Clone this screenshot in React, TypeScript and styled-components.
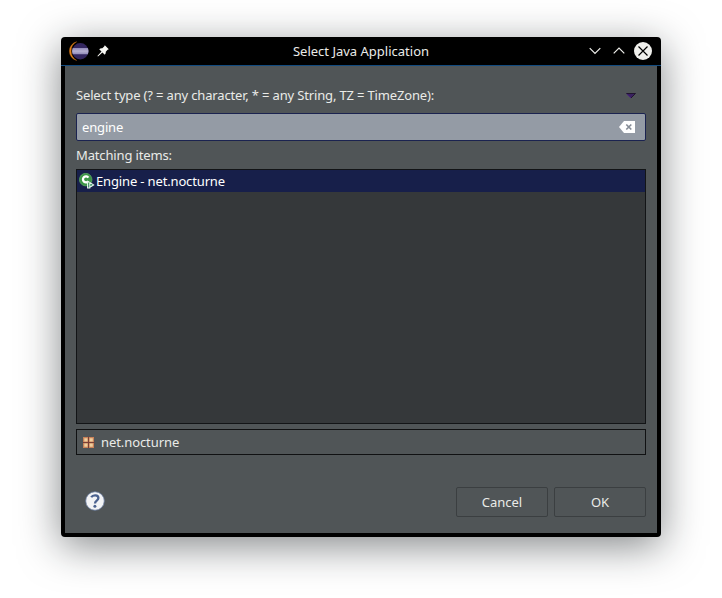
import React from 'react';
import styled, { createGlobalStyle } from 'styled-components';

const GlobalStyle = createGlobalStyle`
  * { box-sizing: border-box; }
  body {
    margin: 0;
    background: #fff;
    font-family: 'Noto Sans', sans-serif;
    font-size: 13px;
    line-height: 18px;
    color: #eaebe8;
    overflow: hidden;
  }
  svg { display: block; flex: none; }
`;

const Desktop = styled.main`
  height: 598px;
  padding: 37px 61px 61px;
`;

const Window = styled.section`
  width: 600px;
  height: 500px;
  display: flex;
  flex-direction: column;
  background: #000;
  border-radius: 4px;
  box-shadow: 0 9px 40px rgba(20, 24, 28, 0.52);
`;

const TitleBar = styled.header`
  height: 29px;
  flex: none;
  display: grid;
  grid-template-columns: 80px 1fr 80px;
  align-items: center;
  padding: 0 9px 0 7px;
  border-bottom: 1px solid #124b80;
`;

const TitleGroup = styled.div<{ $gap: number; $end?: boolean }>`
  display: flex;
  align-items: center;
  gap: ${(p) => p.$gap}px;
  justify-content: ${(p) => (p.$end ? 'flex-end' : 'flex-start')};
`;

const Title = styled.h1`
  margin: 0;
  padding-left: 2px;
  font-size: inherit;
  font-weight: 400;
  text-align: center;
`;

const Content = styled.div`
  flex: 1;
  margin: 0 4px 4px;
  padding: 20px 11px 16px;
  display: flex;
  flex-direction: column;
  background: #505557;
`;

const LabelRow = styled.div`
  height: 27px;
  display: flex;
  justify-content: space-between;
  padding-right: 10px;
`;

const MenuArrow = styled.svg`
  margin-top: 7px;
`;

const Text = styled.span<{ $tracking: number }>`
  white-space: nowrap;
  letter-spacing: ${(p) => p.$tracking}px;
`;

const SearchField = styled.div`
  height: 28px;
  display: flex;
  align-items: center;
  justify-content: space-between;
  padding: 0 10px 0 5px;
  border: 1px solid #1b2350;
  border-radius: 2px;
  background: #949ba5;
  color: #fff;
`;

const MatchLabel = styled.div`
  height: 28px;
  padding-top: 5px;
`;

const List = styled.div`
  height: 255px;
  border: 1px solid #121416;
  background: #35383a;
`;

const ListItem = styled.div`
  height: 22px;
  display: flex;
  align-items: center;
  gap: 1px;
  padding-left: 2px;
  background: #171f4a;
  color: #fff;
`;

const StatusBox = styled.div`
  height: 26px;
  margin-top: 5px;
  display: flex;
  align-items: center;
  gap: 6px;
  padding-left: 6px;
  border: 1px solid #101112;
`;

const Footer = styled.footer`
  display: flex;
  align-items: center;
  gap: 6px;
  margin-top: 32px;
  height: 30px;
`;

const HelpButton = styled.span`
  margin: 0 auto 3px 9px;
`;

const Button = styled.button`
  width: 92px;
  height: 30px;
  padding: 0 0 1px;
  border: 1px solid #3b3f41;
  border-radius: 2px;
  background: #505557;
  color: inherit;
  font: inherit;
`;

const EclipseLogo = () => (
  <svg width="22" height="20" viewBox="0 0 22 20">
    <defs>
      <linearGradient id="band" x1="0" y1="0" x2="0" y2="1">
        <stop offset="0" stopColor="#8f88b8" />
        <stop offset=".5" stopColor="#b9b3d3" />
        <stop offset="1" stopColor="#9089b8" />
      </linearGradient>
    </defs>
    <path d="M8.6 .8A9.6 9.6 0 0 0 8.6 19.4A10.6 10.6 0 0 1 8.6 .8Z" fill="#f08a1c" stroke="#b86712" strokeWidth=".5" />
    <circle cx="12.3" cy="10.2" r="8.2" fill="#33265f" />
    <path d="M4.7 7H19.9A8.3 8.3 0 0 1 19.9 13.2H4.7A8.3 8.3 0 0 1 4.7 7Z" fill="url(#band)" />
    <path d="M4.3 9H20.3M4.3 11.3H20.3" stroke="#a59fc6" strokeWidth=".5" />
  </svg>
);

const Pin = () => (
  <svg width="12" height="12" viewBox="0 0 12 12">
    <path d="M7.8 .2L11.8 4.2L10.6 4.8L8.8 6.8Q9.1 8.5 7.8 9.8L5.4 7.5L1 11.5L.4 11L4.5 6.6L2.2 4.2Q3.6 2.9 5.3 3.2L7.2 1.4Z" fill="#f8f8f4" />
  </svg>
);

const Chevron = ({ d }: { d: string }) => (
  <svg width="12" height="8" viewBox="0 0 12 8">
    <path d={d} fill="none" stroke="#f0f0ec" strokeWidth="1.2" />
  </svg>
);

const Close = () => (
  <svg width="18" height="18" viewBox="0 0 18 18">
    <circle cx="9" cy="9" r="9" fill="#f0f0ec" />
    <path d="M4.5 4.5L13.5 13.5M13.5 4.5L4.5 13.5" stroke="#000" strokeWidth="1.2" />
  </svg>
);

const ClearIcon = () => (
  <svg width="16" height="12" viewBox="0 0 16 12">
    <path d="M0 6L5 0H16V12H5Z" fill="#fff" />
    <path d="M7.3 3.5L12.3 8.5M12.3 3.5L7.3 8.5" stroke="#858c96" strokeWidth="1.7" />
  </svg>
);

const ClassIcon = () => (
  <svg width="16" height="16" viewBox="0 0 16 16">
    <circle cx="6.7" cy="6.6" r="6.3" fill="#3c9547" stroke="#68b96d" strokeWidth=".6" />
    <path d="M9.4 4.6A3 3 0 1 0 9.4 8.1" fill="none" stroke="#fff" strokeWidth="2.3" />
    <path d="M8.6 8.2V15H10.8V9.5L14.6 11.9L10.8 14.2" fill="#2d8a5c" stroke="#e6f5ee" strokeWidth="1.1" />
  </svg>
);

const PackageIcon = () => (
  <svg width="12" height="12" viewBox="0 0 12 12">
    <path d="M0 1H11V12H0Z" fill="#c98259" />
    <path d="M1.3 2.3H4.5V5.4H1.3ZM6.6 2.3H9.8V5.4H6.6ZM1.3 7.6H4.5V10.7H1.3ZM6.6 7.6H9.8V10.7H6.6Z" fill="#efcf9d" />
    <path d="M5.5 .5V12M0 6.5H11.5" stroke="#7b4036" />
  </svg>
);

const HelpIcon = () => (
  <svg width="20" height="20" viewBox="0 0 20 20">
    <circle cx="10" cy="10" r="9.3" fill="#f2f3f5" stroke="#66799d" strokeWidth=".8" />
    <path d="M6.2 6.3C7.8 3.5 13.4 3.5 13.4 7C13.4 9.8 10 9.4 10 12.5" fill="none" stroke="#4b628f" strokeWidth="2.3" />
    <circle cx="9.9" cy="15.3" r="1.5" fill="#4b628f" />
  </svg>
);

export default function App() {
  return (
    <>
      <GlobalStyle />
      <Desktop>
        <Window>
          <TitleBar>
            <TitleGroup $gap={7}>
              <EclipseLogo />
              <Pin />
            </TitleGroup>
            <Title>Select Java Application</Title>
            <TitleGroup $gap={9} $end>
              <TitleGroup $gap={12}>
                <Chevron d="M.7 1.2L6 6.5L11.3 1.2" />
                <Chevron d="M.7 6.3L6 1L11.3 6.3" />
              </TitleGroup>
              <Close />
            </TitleGroup>
          </TitleBar>
          <Content>
            <LabelRow>
              <Text $tracking={-0.16}>Select type (? = any character, * = any String, TZ = TimeZone):</Text>
              <MenuArrow width="10" height="6" viewBox="0 0 10 6">
                <path d="M.5 .5H9.5L5 5Z" fill="#3a2160" stroke="#21152f" />
                <path d="M.8 1L5 5.1" stroke="#4b2486" />
              </MenuArrow>
            </LabelRow>
            <SearchField>
              <Text $tracking={-0.16}>engine</Text>
              <ClearIcon />
            </SearchField>
            <MatchLabel>
              <Text $tracking={-0.14}>Matching items:</Text>
            </MatchLabel>
            <List>
              <ListItem>
                <ClassIcon />
                <Text $tracking={-0.15}>Engine - net.nocturne</Text>
              </ListItem>
            </List>
            <StatusBox>
              <PackageIcon />
              <Text $tracking={-0.08}>net.nocturne</Text>
            </StatusBox>
            <Footer>
              <HelpButton>
                <HelpIcon />
              </HelpButton>
              <Button>Cancel</Button>
              <Button>OK</Button>
            </Footer>
          </Content>
        </Window>
      </Desktop>
    </>
  );
}
